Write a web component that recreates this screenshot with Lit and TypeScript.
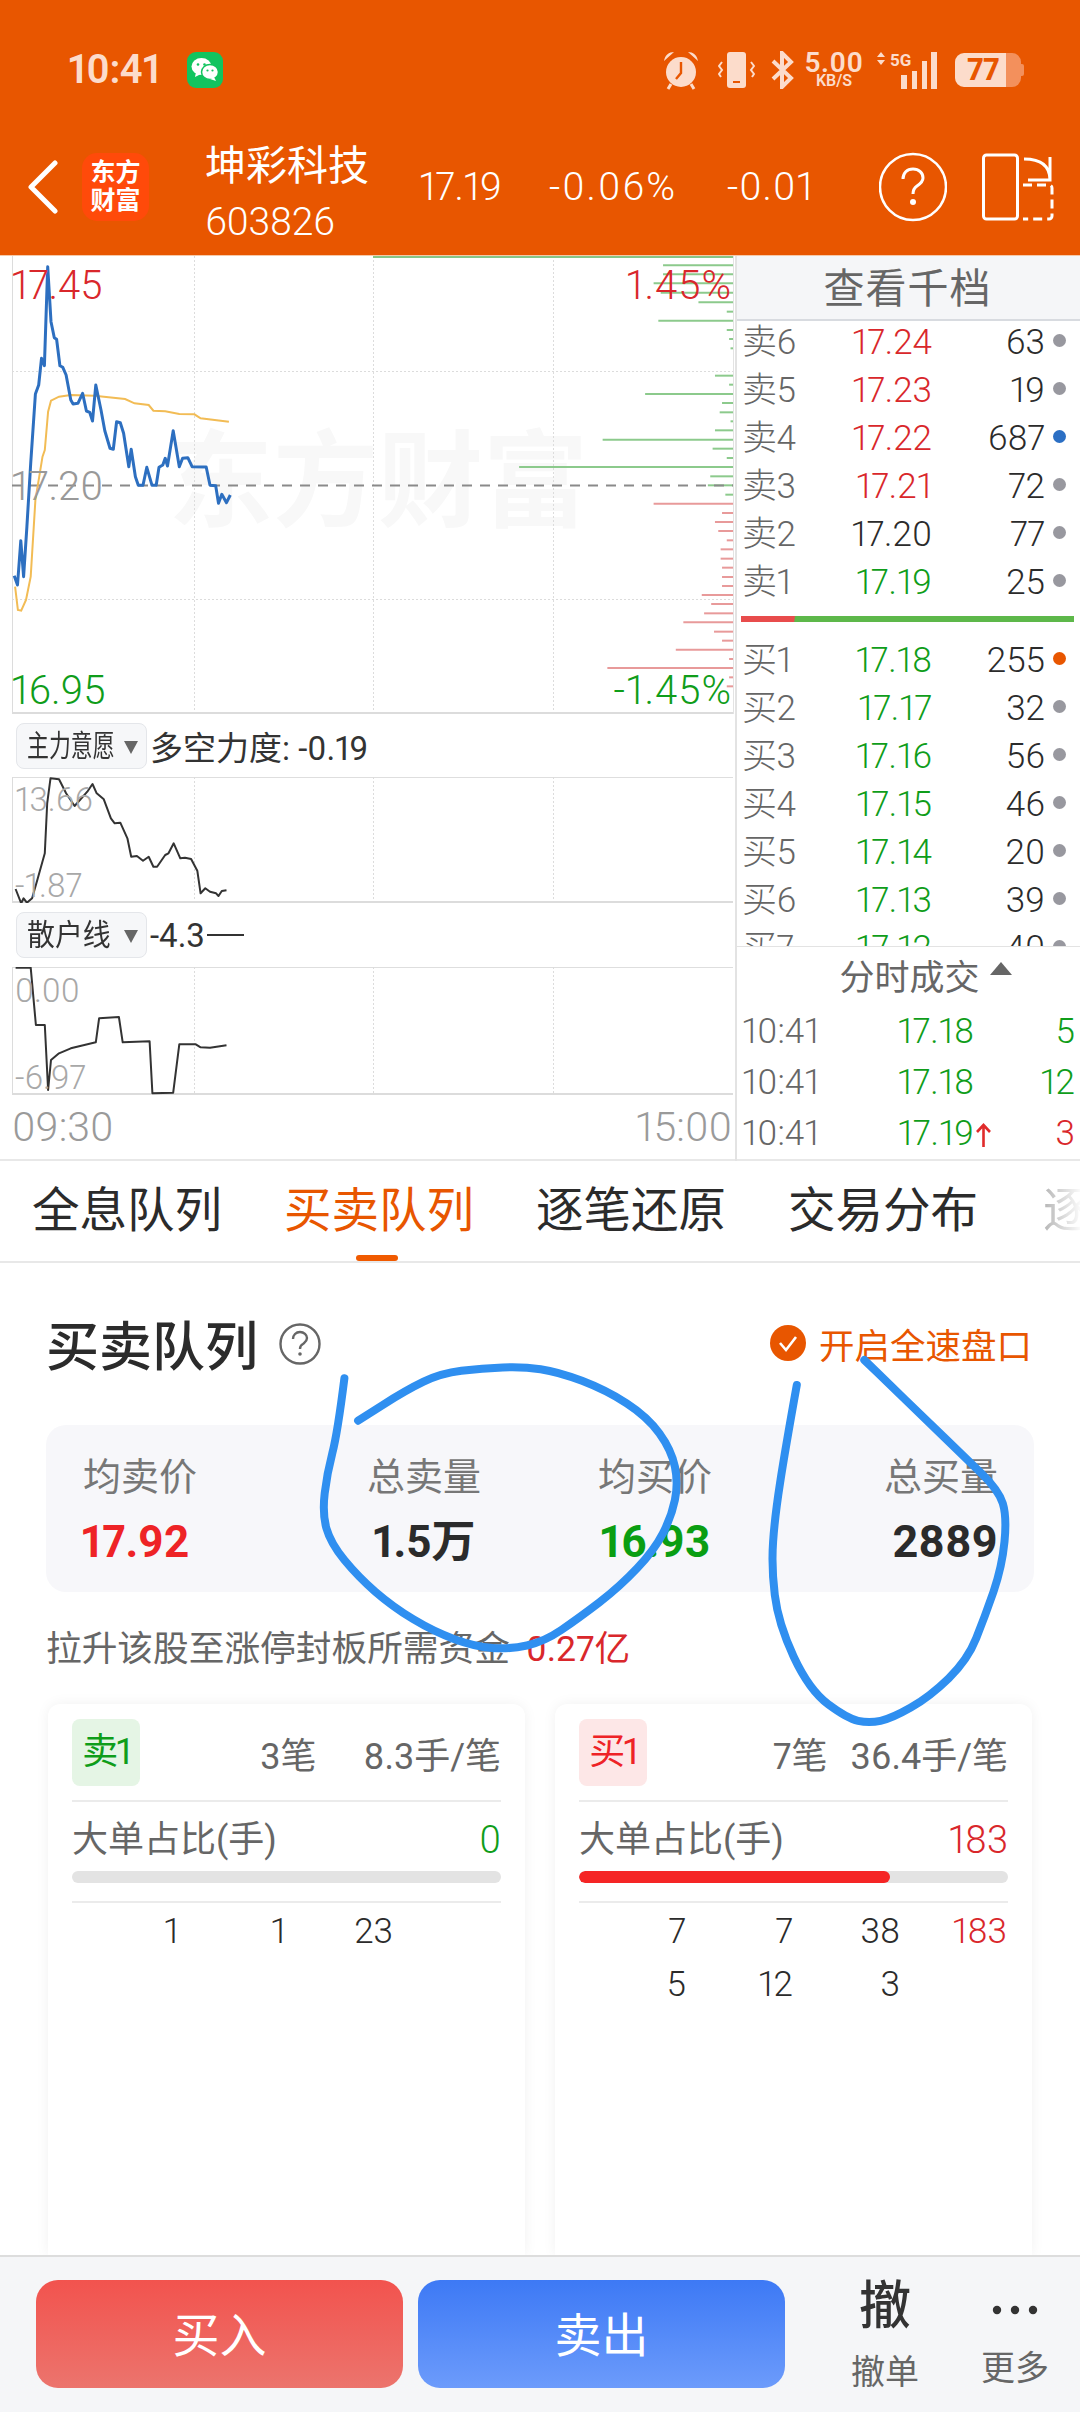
import { LitElement, html, css, svg } from "lit";
import { customElement } from "lit/decorators.js";

type P = [number, number];

const BLUE: P[] = [[30,977],[37,1005],[44,872],[50,980],[57,830],[65,640],[75,432],[82,405],[88,325],[94,347],[101,50],[108,215],[115,263],[120,268],[127,347],[133,352],[140,375],[150,450],[155,462],[165,460],[175,430],[183,483],[190,487],[196,513],[203,405],[214,480],[222,542],[233,595],[240,598],[247,515],[255,518],[262,550],[273,650],[278,598],[287,680],[293,706],[303,706],[311,652],[322,706],[331,706],[337,652],[345,645],[350,625],[355,648],[367,542],[380,650],[387,625],[398,623],[407,650],[437,651],[445,706],[457,707],[463,760],[470,733],[480,758],[488,735]];
const YELLOW: P[] = [[32,1010],[38,1080],[45,1082],[55,1050],[65,980],[75,750],[90,620],[95,600],[102,485],[108,452],[125,440],[150,435],[200,437],[265,447],[285,460],[315,465],[325,482],[350,484],[380,492],[412,493],[425,505],[485,515]];
const LINE1: P[] = [[33,537],[45,580],[50,565],[57,578],[68,565],[80,505],[95,430],[100,280],[107,205],[125,208],[140,250],[158,288],[185,245],[196,222],[205,250],[220,268],[235,325],[243,340],[255,338],[270,385],[278,440],[290,438],[303,452],[315,440],[325,470],[333,470],[350,435],[357,430],[368,400],[382,445],[392,443],[405,447],[418,482],[425,550],[435,535],[445,545],[458,550],[463,558],[470,543],[480,541]];
const LINE2: P[] = [[33,773],[65,773],[76,945],[95,945],[102,1140],[108,1050],[125,1030],[150,1015],[203,997],[210,925],[252,921],[260,997],[317,994],[323,1150],[367,1148],[380,1003],[415,1003],[425,1012],[445,1013],[480,1006]];
const GREEN_BARS: P[] = [[46,1405],[73,1405],[100,1385],[128,1400],[157,1480],[185,1540],[212,1395],[240,1540],[267,1545],[295,1548],[377,1515],[404,1545],[432,1367],[459,1530],[487,1525],[514,1548],[541,1515],[569,1277],[596,1510],[624,1540],[651,1100],[679,1505],[706,1500],[734,1537]];
const RED_BARS: P[] = [[761,1385],[789,1530],[816,1515],[843,1522],[871,1540],[898,1527],[926,1527],[953,1530],[981,1530],[1008,1530],[1035,1487],[1062,1507],[1090,1492],[1117,1448],[1145,1513],[1172,1530],[1199,1432],[1227,1545],[1254,1287],[1282,1545],[1309,1540]];

const CIRCLE: P[] = [[500,685],[490,850],[475,970],[468,1090],[480,1180],[520,1280],[570,1370],[630,1445],[690,1490],[740,1498],[790,1475],[840,1405],[900,1310],[950,1200],[975,1100],[985,1000],[975,900],[940,800],[880,720],[810,665],[760,650],[700,655],[640,670],[590,720],[520,812]];
const LOOP_A: P[] = [[1157,705],[1140,900],[1125,1100],[1120,1250],[1130,1420]];
const LOOP_B: P[] = [[1175,90],[1230,175],[1262,190],[1295,175],[1350,110],[1405,0]];
const LOOP_C: P[] = [[1430,1400],[1455,1250],[1462,1100],[1450,1020],[1400,920],[1340,800],[1290,700],[1255,630]];

const mapMain = (p: P): P => [p[0] / 2.119, p[1] / 3 + 250 - 256];
const mapSub = (top: number) => (p: P): P => [p[0] / 2.119, p[1] / 3 + 710 - top];
const poly = (pts: P[]) => pts.map((p) => `${p[0].toFixed(1)},${p[1].toFixed(1)}`).join(" ");

function smooth(pts: P[]): string {
  let d = `M${pts[0][0].toFixed(1)} ${pts[0][1].toFixed(1)}`;
  for (let i = 1; i < pts.length - 1; i++) {
    const mx = (pts[i][0] + pts[i + 1][0]) / 2;
    const my = (pts[i][1] + pts[i + 1][1]) / 2;
    d += `Q${pts[i][0].toFixed(1)} ${pts[i][1].toFixed(1)} ${mx.toFixed(1)} ${my.toFixed(1)}`;
  }
  const l = pts[pts.length - 1];
  return d + `L${l[0].toFixed(1)} ${l[1].toFixed(1)}`;
}
const z6 = (p: P): P => [p[0] / 1.452, p[1] / 3 + 1150];
const z7 = (p: P): P => [p[0] / 1.452, p[1] / 3 + 1660];

const SELL = [
  ["卖6", "17.24", "r", "63", "g"], ["卖5", "17.23", "r", "19", "g"], ["卖4", "17.22", "r", "687", "b"],
  ["卖3", "17.21", "r", "72", "g"], ["卖2", "17.20", "k", "77", "g"], ["卖1", "17.19", "v", "25", "g"],
];
const BUY = [
  ["买1", "17.18", "v", "255", "o"], ["买2", "17.17", "v", "32", "g"], ["买3", "17.16", "v", "56", "g"],
  ["买4", "17.15", "v", "46", "g"], ["买5", "17.14", "v", "20", "g"], ["买6", "17.13", "v", "39", "g"],
  ["买7", "17.12", "v", "40", "g"],
];

@customElement("app-root")
export class AppRoot extends LitElement {
  static styles = css`
    :host { display: block; width: 1080px; height: 2412px; position: relative; overflow: hidden; background: #fff;
      font-family: Roboto, "Noto Sans CJK SC", sans-serif; color: #2b2b2b; font-variant-numeric: proportional-nums; }
    svg { display: block; }
    .page { display: flex; flex-direction: column; height: 2412px; }
    .top { height: 256px; background: #e85600; flex: none; box-sizing: border-box; padding-top: 48px; color: #fff; border-bottom: 1px solid #f6c9a8; }
    .status { display: flex; align-items: center; height: 44px; color: #fcdccb; }
    .clock { margin-left: 68px; font-size: 40px; font-weight: 600; line-height: 44px; width: 119px; letter-spacing: -0.5px; }
    .wechat { width: 36px; height: 36px; border-radius: 9px; background: #12c45f; display: flex; align-items: center; justify-content: center; }
    .status-r { margin-left: auto; display: flex; align-items: center; padding-right: 59px; }
    .speed { margin-left: 10px; width: 60px; display: flex; flex-direction: column; align-items: center; font-weight: 700; }
    .speed b { font-size: 28px; line-height: 21px; letter-spacing: 0.5px; font-weight: 600; }
    .speed span { font-size: 16px; line-height: 15px; font-weight: 600; }
    .ml16 { margin-left: 16px; } .ml19 { margin-left: 19px; } .ml12 { margin-left: 12px; }
    .battery { margin-left: 17px; width: 66px; height: 34px; border-radius: 9px; background: linear-gradient(90deg, #fcdccb 77%, #f3905c 77%); color: #e85600; font-size: 31px; font-weight: 800; line-height: 34px; text-align: center; padding-right: 10px; box-sizing: border-box; letter-spacing: -0.5px; }
    .nub { width: 3px; height: 12px; background: #f3905c; border-radius: 0 2px 2px 0; margin-right: -3px; }

    .nav { display: flex; align-items: center; height: 110px; margin-top: 40px; position: relative; }
    .back { margin-left: 27px; }
    .logo { margin-left: 24px; width: 67px; height: 68px; border-radius: 15px; background: #ff4a0a; color: #fff; font-size: 25px; line-height: 28px; font-weight: 700; text-align: center; display: flex; flex-direction: column; justify-content: center; }
    .name { margin-left: 56px; width: 214px; display: flex; flex-direction: column; padding-top: 12px; box-sizing: border-box; }
    .name b { font-weight: 400; font-size: 41px; line-height: 46px; }
    .name span { font-size: 39px; line-height: 42px; font-weight: 300; margin-top: 12px; letter-spacing: -0.4px; }
    .quote { font-size: 39px; font-weight: 300; line-height: 40px; margin-top: 0; white-space: nowrap; }
    .q1 { width: 130px; letter-spacing: -0.5px; } .q2 { width: 178px; letter-spacing: 2px; } .q3 { width: 152px; letter-spacing: 1px; }
    .split { margin-left: 35px; }

    .main { display: grid; grid-template-columns: 735px 345px; height: 902px; flex: none; }
    .left { display: flex; flex-direction: column; position: relative; }
    .pane { position: relative; }
    .pane svg { position: absolute; left: 0; top: 0; }
    .p-main { height: 458px; }
    .p-a { height: 126px; }
    .p-b { height: 128px; }
    .mark { position: absolute; left: 168px; top: 172px; font-size: 105px; line-height: 110px; font-weight: 700; color: #f8f8f8; white-space: nowrap; }
    .lb { position: absolute; font-size: 40px; line-height: 40px; font-weight: 300; }
    .lb.l { left: 11px; } .lb.r { right: 3px; letter-spacing: 1px; }
    .lb.red { color: #d9272b; } .lb.grn { color: #0f9d1a; } .lb.gry { color: #999; }
    .sm { position: absolute; left: 15px; font-size: 33px; line-height: 34px; font-weight: 300; color: #a8a8a8; }
    .ind { display: flex; align-items: center; height: 63px; padding-left: 16px; box-sizing: border-box; font-size: 33px; color: #333; }
    .ind.b { height: 64px; }
    .dd { width: 131px; height: 46px; box-sizing: border-box; border: 1px solid #e4e6ea; border-radius: 8px; background: #f6f7f9; display: flex; align-items: center; margin-right: 3px; position: relative; flex: none; }
    .dd span { position: absolute; left: 10px; font-size: 30px; line-height: 44px; transform-origin: left center; white-space: nowrap; }
    .dd .s4 { transform: scaleX(0.73); }
    .dd .s3 { transform: scaleX(0.93); }
    .dd i { position: absolute; right: 8px; top: 17px; width: 0; height: 0; border-left: 7px solid transparent; border-right: 7px solid transparent; border-top: 13px solid #666; }
    .dash { display: inline-block; width: 37px; height: 2px; background: #333; margin-left: 2px; }
    .axis { flex: 1; display: flex; justify-content: space-between; align-items: center; padding: 0 3px 0 12px; font-size: 41px; font-weight: 300; color: #9a9a9a; border-bottom: 2px solid #e8e8e8; }

    .right { border-left: 2px solid #e3e3e3; display: flex; flex-direction: column; box-sizing: border-box; }
    .rhead { height: 65px; flex: none; box-sizing: border-box; background: #f5f6f8; border-bottom: 2px solid #d8dbe0; font-size: 41px; line-height: 67px; text-align: center; color: #666; letter-spacing: 1px; padding-right: 2px; }
    .book { height: 625px; flex: none; overflow: hidden; border-bottom: 1px solid #e3e3e3; box-sizing: content-box; }
    .book > div:first-child { margin-top: -2px; }
    .row { display: grid; grid-template-columns: 70px 119px 113px 1fr; height: 48px; line-height: 48px; padding-left: 6px; font-size: 35px; font-weight: 300; }
    .row .n { color: #666; font-size: 35px; letter-spacing: -0.6px; white-space: nowrap; margin-left: -1px; }
    .row .p, .row .q { text-align: right; }
    .row .q { color: #2b2b2b; }
    .r { color: #d9272b; } .v { color: #0f9d1a; } .k { color: #2b2b2b; }
    .dot { width: 13px; height: 13px; border-radius: 50%; margin: 15px 0 0 8px; }
    .dot.g { background: #98989f; } .dot.b { background: #2b6fc4; } .dot.o { background: #e85600; }
    .gauge { height: 6px; margin: 9px 6px 15px 4px; background: linear-gradient(100deg, #e84c4c 16%, #5db84a 16.4%); }
    .trades { flex: 1; box-sizing: border-box; border-bottom: 2px solid #e8e8e8; }
    .thead { height: 59px; display: flex; align-items: center; justify-content: center; font-size: 35px; color: #666; gap: 10px; padding: 0 0 4px 34px; box-sizing: border-box; }
    .thead i { width: 0; height: 0; border-left: 11px solid transparent; border-right: 11px solid transparent; border-bottom: 13px solid #666; margin-top: -12px; }
    .trow { display: grid; grid-template-columns: 103px 129px 15px 1fr; padding: 0 5px; height: 51px; line-height: 51px; font-size: 35px; font-weight: 300; }
    .trow .t { color: #666; } .trow .p { text-align: right; } .trow .q { text-align: right; }
    .trow svg { margin: 15px 0 0 2px; }

    .tabs { height: 105px; flex: none; box-sizing: border-box; border-bottom: 2px solid #e8e8e8; display: flex; padding-left: 32px; gap: 64px; overflow: hidden; font-size: 47.5px; }
    .tab { width: 188px; flex: none; line-height: 106px; text-align: center; position: relative; white-space: nowrap; color: #2b2b2b; }
    .tab.on { color: #e85600; }
    .tab.on::after { content: ""; position: absolute; left: 72px; bottom: 0; width: 42px; height: 6px; border-radius: 3px; background: #f05a00; }
    .tab.fade { color: #b5b5b5; text-align: left; margin-left: 3px; -webkit-mask-image: linear-gradient(90deg, #000 0, transparent 40px); mask-image: linear-gradient(90deg, #000 0, transparent 40px); }

    .body { flex: 1; min-height: 0; overflow: hidden; padding: 54px 46px 0; box-sizing: border-box; display: flex; flex-direction: column; }
    .title { display: flex; align-items: center; height: 52px; flex: none; }
    .title b { font-size: 53px; font-weight: 500; color: #2b2b2b; }
    .help { margin-left: 21px; margin-top: 2px; }
    .fast { margin-left: auto; display: flex; align-items: center; gap: 13px; font-size: 35.5px; color: #e85600; padding-right: 2px; }
    .stats { margin-top: 56px; height: 167px; flex: none; background: #f7f7fa; border-radius: 20px; box-sizing: border-box; padding: 32px 0 0 37px; display: grid; grid-template-columns: 284px 231px 286px 114px; }
    .st { width: 114px; display: flex; flex-direction: column; align-items: center; white-space: nowrap; }
    .st.a { align-items: flex-start; } .st.z { align-items: flex-end; }
    .st span { font-size: 38px; line-height: 40px; color: #777; }
    .st b { font-size: 44px; line-height: 50px; margin-top: 20px; font-weight: 700; color: #2b2b2b; }
    .st.a b { margin-left: -2px; }
    .st.z b { font-size: 45px; }
    .st b.r2 { color: #ee2326; } .st b.g2 { color: #0a9e12; }
    .note { margin-top: 35px; height: 44px; line-height: 44px; font-size: 35.7px; color: #666; flex: none; white-space: nowrap; }
    .note em { font-style: normal; color: #d9272b; margin-left: 16px; }
    .cards { margin-top: 33px; flex: 1; display: grid; grid-template-columns: 477px 477px; gap: 30px; padding: 0 2px; }
    .card { background: #fff; border-radius: 12px 12px 0 0; box-shadow: 0 0 14px rgba(0,0,0,0.06); padding: 15px 24px 0; box-sizing: border-box; }
    .chead { display: flex; align-items: center; height: 67px; font-size: 36px; color: #666; padding-bottom: 14px; box-sizing: content-box; border-bottom: 2px solid #ebebeb; }
    .tag { width: 68px; height: 67px; border-radius: 8px; line-height: 67px; text-align: center; font-size: 36px; letter-spacing: -2px; }
    .tag.s { background: #e5f5e5; color: #0f9d1a; } .tag.b { background: #fde7e7; color: #ee2326; }
    .chead .c1 { margin-left: auto; } .chead .c2 { margin-left: 47px; }
    .chead.t .c2 { margin-left: 23px; }
    .big { display: flex; justify-content: space-between; height: 60px; line-height: 60px; margin-top: 8px; font-size: 36px; color: #666; }
    .big em { font-style: normal; font-weight: 300; font-size: 38px; }
    .bar { margin-top: 1px; height: 12px; border-radius: 6px; background: #e3e3e3; overflow: hidden; }
    .bar div { height: 12px; border-radius: 6px; background: #f52525; }
    .nums { margin-top: 18px; border-top: 2px solid #ebebeb; padding-top: 2px; display: grid; grid-template-columns: repeat(4, 107px); grid-auto-rows: 53px; line-height: 53px; font-size: 35px; font-weight: 300; text-align: right; color: #2b2b2b; }
    .nums .r { color: #d9272b; }

    .foot { height: 157px; flex: none; box-sizing: border-box; background: #f5f6f8; border-top: 2px solid #ddd; padding: 23px 0 0 36px; display: flex; }
    .btn { width: 367px; height: 108px; border-radius: 22px; color: #fff; font-size: 47px; line-height: 112px; text-align: center; margin-right: 15px; }
    .buy { background: linear-gradient(180deg, #f2534e, #ec746d); }
    .sell { background: linear-gradient(180deg, #3d79f5, #6c9bfb); }
    .act { width: 100px; display: flex; flex-direction: column; align-items: center; color: #666; font-size: 34px; line-height: 44px; }
    .act b { height: 72px; font-size: 52px; line-height: 58px; font-weight: 500; color: #333; margin-top: -2px; }
    .act .dots { height: 66px; display: flex; align-items: center; padding-bottom: 6px; box-sizing: border-box; }
    .a1 { margin-left: 35px; } .a2 { margin-left: 30px; }
    .ink { position: absolute; left: 0; top: 0; pointer-events: none; }
  `;

  private grid(h: number) {
    return [194.5, 373.5, 553.5].map(
      (x) => svg`<line x1=${x} y1="0" x2=${x} y2=${h} stroke="#dcdcdc" stroke-width="1" stroke-dasharray="2 2"/>`
    );
  }

  private mainChart() {
    const b = (pts: P[], c: string) =>
      pts.map((p) => {
        const y = p[0] / 3 + 250 - 256;
        return svg`<line x1=${p[1] / 2.119} x2="733" y1=${y} y2=${y} stroke=${c} stroke-width="2"/>`;
      });
    return svg`<svg width="735" height="458">
      <line x1="12.5" y1="0" x2="12.5" y2="458" stroke="#dcdcdc"/>
      <line x1="733.5" y1="0" x2="733.5" y2="458" stroke="#e3e3e3"/>
      ${this.grid(458)}
      <line x1="12" y1="115.5" x2="733" y2="115.5" stroke="#dcdcdc" stroke-dasharray="2 2"/>
      <line x1="12" y1="343.5" x2="733" y2="343.5" stroke="#dcdcdc" stroke-dasharray="2 2"/>
      <line x1="12" y1="457" x2="733" y2="457" stroke="#dcdcdc" stroke-width="2"/>
      <line x1="373" y1="1" x2="733" y2="1" stroke="#86c586" stroke-width="2"/>
      ${b(GREEN_BARS, "#8cca8c")}
      ${b(RED_BARS, "#e89a9a")}
      <line x1="12" y1="229.5" x2="733" y2="229.5" stroke="#8a8a8a" stroke-width="2" stroke-dasharray="10 8"/>
      <polyline points=${poly(YELLOW.map(mapMain))} fill="none" stroke="#f2bc55" stroke-width="2"/>
      <polyline points=${poly(BLUE.map(mapMain))} fill="none" stroke="#2d6fc0" stroke-width="3" stroke-linejoin="round"/>
    </svg>`;
  }

  private subChart(h: number, pts: P[], top: number) {
    return svg`<svg width="735" height=${h}>
      <line x1="12" y1="0.5" x2="733" y2="0.5" stroke="#dedede"/>
      <line x1="12" y1=${h - 1} x2="733" y2=${h - 1} stroke="#dcdcdc" stroke-width="2"/>
      <line x1="12.5" y1="0" x2="12.5" y2=${h} stroke="#dcdcdc"/>
      ${this.grid(h)}
      <polyline points=${poly(pts.map(mapSub(top)))} fill="none" stroke="#333" stroke-width="2" stroke-linejoin="round"/>
    </svg>`;
  }

  private bookRow(r: string[]) {
    return html`<div class="row"><span class="n">${r[0]}</span><span class="p ${r[2]}">${r[1]}</span><span class="q">${r[3]}</span><span class="dot ${r[4]}"></span></div>`;
  }

  private trade(p: string, q: string, up = false) {
    return html`<div class="trow"><span class="t">10:41</span><span class="p v">${p}</span>
      ${up ? svg`<svg width="15" height="24" viewBox="0 0 15 24"><path d="M7.5 24V2M1 9l6.5-7L14 9" fill="none" stroke="#e02b2b" stroke-width="2.6"/></svg>` : html`<span></span>`}
      <span class="q ${up ? "r" : "v"}">${q}</span></div>`;
  }

  render() {
    return html`<div class="page">
      <div class="top">
        <div class="status">
          <span class="clock">10:41</span>
          <span class="wechat"><svg width="30" height="26" viewBox="0 0 30 26"><ellipse cx="11.5" cy="9.5" rx="10" ry="8.5" fill="#fff"/><path d="M6 15l-1 5 6-3z" fill="#fff"/><ellipse cx="20" cy="15" rx="8.5" ry="7.5" fill="#fff" stroke="#12c45f" stroke-width="1.5"/><path d="M24 20l2 4-6-2z" fill="#fff"/><circle cx="8" cy="7.5" r="1.3" fill="#12c45f"/><circle cx="14.5" cy="7.5" r="1.3" fill="#12c45f"/><circle cx="17.5" cy="13.5" r="1.1" fill="#12c45f"/><circle cx="22.5" cy="13.5" r="1.1" fill="#12c45f"/></svg></span>
          <div class="status-r">
            <svg width="36" height="40" viewBox="0 0 36 40"><circle cx="18" cy="22" r="15" fill="#fcdccb"/><path d="M18 12v11l-5 6" fill="none" stroke="#e85600" stroke-width="2.4"/><path d="M1 11C2 5 6 2 11 2zM35 11C34 5 30 2 25 2z" fill="#fcdccb"/><path d="M8 34l-3 5M28 34l3 5" stroke="#fcdccb" stroke-width="3"/></svg>
            <svg class="ml19" width="37" height="38" viewBox="0 0 37 38"><rect x="9" y="1" width="19" height="36" rx="3" fill="#fcdccb"/><rect x="15" y="30" width="7" height="2" fill="#e85600"/><path d="M4 11l-3 4 3 4-3 4 2 3M33 11l3 4-3 4 3 4-2 3" fill="none" stroke="#fcdccb" stroke-width="2"/></svg>
            <svg class="ml16" width="23" height="38" viewBox="0 0 23 38"><path d="M2 10l18 17-9 9V2l9 9L2 28" fill="none" stroke="#fcdccb" stroke-width="4"/></svg>
            <div class="speed"><b>5.00</b><span>KB/S</span></div>
            <svg class="ml12" width="62" height="38" viewBox="0 0 62 38"><path d="M5 1l4 5H1zM5 14l4-5H1z" fill="#fcdccb"/><text x="14" y="15" font-size="17" font-weight="700" fill="#fcdccb" font-family="Roboto">5G</text><rect x="25" y="24" width="6" height="14" fill="#fcdccb"/><rect x="36" y="20" width="5" height="18" fill="#fcdccb"/><rect x="46" y="10" width="5" height="28" fill="#fcdccb"/><rect x="55" y="1" width="6" height="37" fill="#fcdccb"/></svg>
            <div class="battery">77</div><div class="nub"></div>
          </div>
        </div>
        <div class="nav">
          <svg class="back" width="31" height="54" viewBox="0 0 31 54"><path d="M28 3L4 27l24 24" fill="none" stroke="#fff" stroke-width="5" stroke-linecap="round" stroke-linejoin="round"/></svg>
          <div class="logo"><span>东方</span><span>财富</span></div>
          <div class="name"><b>坤彩科技</b><span>603826</span></div>
          <span class="quote q1">17.19</span><span class="quote q2">-0.06%</span><span class="quote q3">-0.01</span>
          <svg width="68" height="70" viewBox="0 0 68 70"><circle cx="34" cy="35" r="33" fill="none" stroke="#fff" stroke-width="2.5"/><path d="M24 27c0-6 4-10 10-10s10 4 10 9c0 4-3 6-6 8-3 2-4 4-4 8" fill="none" stroke="#fff" stroke-width="3"/><circle cx="34" cy="50" r="3" fill="#fff"/></svg>
          <svg class="split" width="72" height="68" viewBox="0 0 72 68"><rect x="1.5" y="2" width="34" height="64" rx="3" fill="none" stroke="#fff" stroke-width="3"/><path d="M42 6c16 0 26 6 26 21M68 4v23H46" fill="none" stroke="#fff" stroke-width="3"/><path d="M41 32h26a3 3 0 0 1 3 3v28a3 3 0 0 1-3 3H41" fill="none" stroke="#fff" stroke-width="3" stroke-dasharray="9 5"/></svg>
        </div>
      </div>

      <div class="main">
        <div class="left">
          <div class="pane p-main">
            <div class="mark">东方财富</div>
            ${this.mainChart()}
            <span class="lb l red" style="top:10px">17.45</span>
            <span class="lb r red" style="top:10px">1.45%</span>
            <span class="lb l gry" style="top:211px">17.20</span>
            <span class="lb l grn" style="top:415px">16.95</span>
            <span class="lb r grn" style="top:415px">-1.45%</span>
          </div>
          <div class="ind"><div class="dd"><span class="s4">主力意愿</span><i></i></div>多空力度: -0.19</div>
          <div class="pane p-a">
            ${this.subChart(126, LINE1, 777)}
            <span class="sm" style="top:6px">13.66</span>
            <span class="sm" style="top:92px">-1.87</span>
          </div>
          <div class="ind b"><div class="dd"><span class="s3">散户线</span><i></i></div>-4.3<span class="dash"></span></div>
          <div class="pane p-b">
            ${this.subChart(128, LINE2, 967)}
            <span class="sm" style="top:7px">0.00</span>
            <span class="sm" style="top:94px">-6.97</span>
          </div>
          <div class="axis"><span>09:30</span><span>15:00</span></div>
        </div>
        <div class="right">
          <div class="rhead">查看千档</div>
          <div class="book">
            ${SELL.map((r) => this.bookRow(r))}
            <div class="gauge"></div>
            ${BUY.map((r) => this.bookRow(r))}
          </div>
          <div class="trades">
            <div class="thead"><span>分时成交</span><i></i></div>
            ${this.trade("17.18", "5")}
            ${this.trade("17.18", "12")}
            ${this.trade("17.19", "3", true)}
          </div>
        </div>
      </div>

      <div class="tabs">
        <div class="tab">全息队列</div>
        <div class="tab on">买卖队列</div>
        <div class="tab">逐笔还原</div>
        <div class="tab">交易分布</div>
        <div class="tab fade">逐</div>
      </div>

      <div class="body">
        <div class="title">
          <b>买卖队列</b>
          <svg class="help" width="42" height="42" viewBox="0 0 42 42"><circle cx="21" cy="21" r="19.5" fill="none" stroke="#666" stroke-width="2.4"/><path d="M14 16c0-4 3-7 7-7s7 3 7 6c0 3-2 4-4 6-2 1-3 3-3 5" fill="none" stroke="#666" stroke-width="2.4"/><circle cx="21" cy="31" r="1.8" fill="#666"/></svg>
          <div class="fast">
            <svg width="36" height="36" viewBox="0 0 36 36"><circle cx="18" cy="18" r="18" fill="#e85600"/><path d="M10 18l6 7 10-13" fill="none" stroke="#fff" stroke-width="2.6"/></svg>
            <span>开启全速盘口</span>
          </div>
        </div>
        <div class="stats">
          <div class="st a"><span>均卖价</span><b class="r2">17.92</b></div>
          <div class="st"><span>总卖量</span><b>1.5万</b></div>
          <div class="st"><span>均买价</span><b class="g2">16.93</b></div>
          <div class="st z"><span>总买量</span><b>2889</b></div>
        </div>
        <div class="note">拉升该股至涨停封板所需资金<em>0.27亿</em></div>
        <div class="cards">
          <div class="card">
            <div class="chead"><span class="tag s">卖1</span><span class="c1">3笔</span><span class="c2">8.3手/笔</span></div>
            <div class="big"><span>大单占比(手)</span><em class="v">0</em></div>
            <div class="bar"></div>
            <div class="nums"><span>1</span><span>1</span><span>23</span><span></span></div>
          </div>
          <div class="card">
            <div class="chead t"><span class="tag b">买1</span><span class="c1">7笔</span><span class="c2">36.4手/笔</span></div>
            <div class="big"><span>大单占比(手)</span><em class="r">183</em></div>
            <div class="bar"><div style="width:72.5%"></div></div>
            <div class="nums"><span>7</span><span>7</span><span>38</span><span class="r">183</span><span>5</span><span>12</span><span>3</span><span></span></div>
          </div>
        </div>
      </div>

      <div class="foot">
        <div class="btn buy">买入</div>
        <div class="btn sell">卖出</div>
        <div class="act a1"><b>撤</b><span>撤单</span></div>
        <div class="act a2"><span class="dots"><svg width="46" height="10" viewBox="0 0 46 10"><circle cx="5" cy="5" r="4.2" fill="#333"/><circle cx="23" cy="5" r="4.2" fill="#333"/><circle cx="41" cy="5" r="4.2" fill="#333"/></svg></span><span>更多</span></div>
      </div>
    </div>

    <svg class="ink" width="1080" height="2412" fill="none" stroke="#2f8ff0" stroke-width="8" stroke-linecap="round" stroke-linejoin="round">
      <path d=${smooth(CIRCLE.map(z6))}/>
      <path d=${smooth([...LOOP_A.map(z6), ...LOOP_B.map(z7), ...LOOP_C.map(z6)])}/>
    </svg>`;
  }
}
